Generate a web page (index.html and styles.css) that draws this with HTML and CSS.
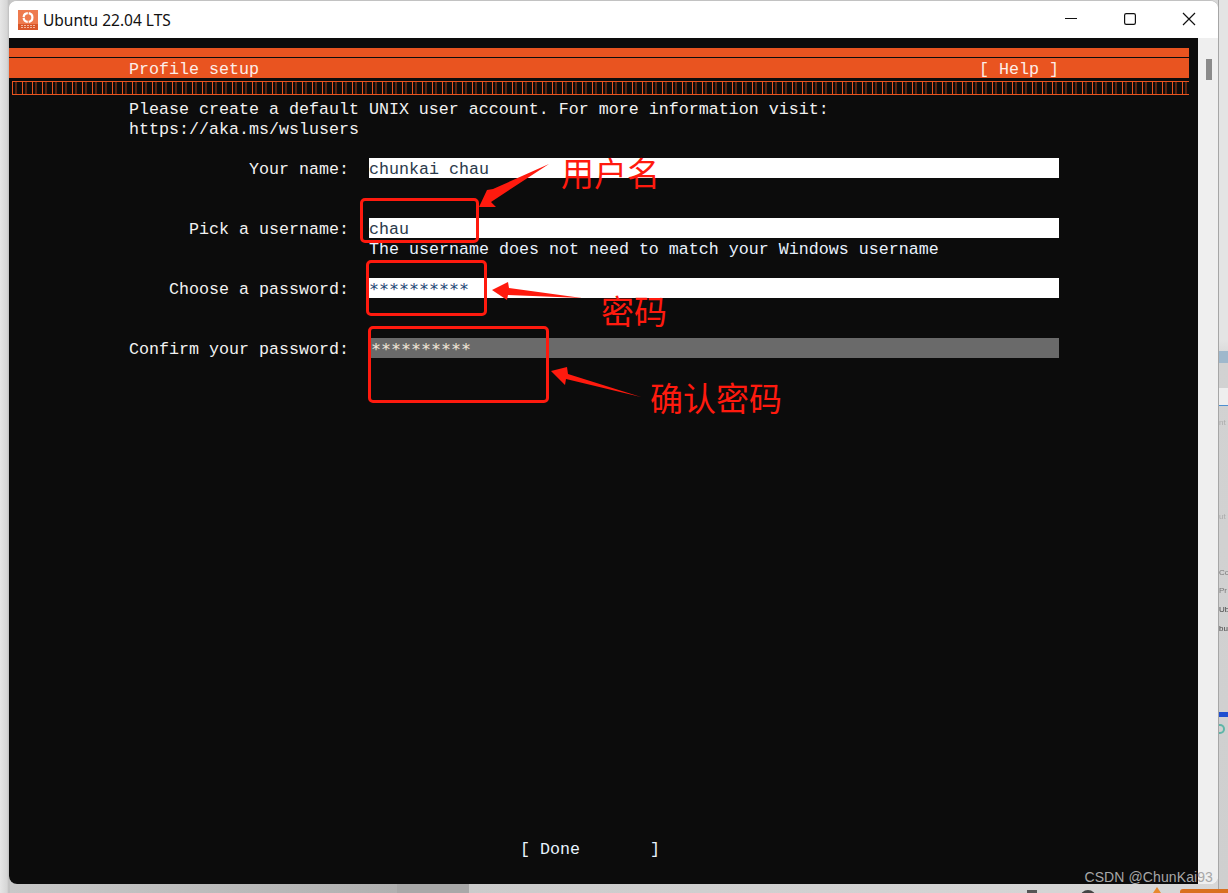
FILE: index.html
```html
<!DOCTYPE html>
<html lang="en">
<head>
<meta charset="utf-8">
<title>Ubuntu 22.04 LTS</title>
<link rel="stylesheet" href="styles.css">
</head>
<body>
<div class="desktop">
  <div class="backdrop-right">
    <div class="bd-blue"></div>
    <div class="bd-pale"></div>
    <div class="bd-line"></div>
    <span class="bd-t bd-t0">nt</span>
    <span class="bd-t bd-t5">ut</span>
    <span class="bd-t bd-t1">Co</span>
    <span class="bd-t bd-t2">Pr</span>
    <span class="bd-t bd-t3">Ub</span>
    <span class="bd-t bd-t4">bu</span>
    <div class="bd-bar"></div>
    <div class="bd-ring"></div>
  </div>
  <div class="taskbar-bits">
    <div class="bit bit-a"></div>
    <div class="bit bit-b"></div>
    <div class="bit bit-c"></div>
    <div class="bit bit-d"></div>
  </div>
  <div class="window">
    <header class="titlebar">
      <svg class="app-icon" width="20" height="20" viewBox="0 0 20 20">
        <rect width="20" height="20" fill="#ee7a4e"/>
        <rect y="14" width="20" height="6" fill="#d9572a"/>
        <circle cx="10" cy="7.5" r="4.4" fill="none" stroke="#fff" stroke-width="2.2" stroke-dasharray="6 1"/>
        <path d="M3 15.5h14M3 17.5h14" stroke="#f3b79f" stroke-width="1" stroke-dasharray="2 1"/>
      </svg>
      <span class="app-title">Ubuntu 22.04 LTS</span>
      <div class="win-controls">
        <svg class="win-btn" width="14" height="14" viewBox="0 0 14 14"><path d="M1 6.5h12" stroke="#111" stroke-width="1.2" fill="none"/></svg>
        <svg class="win-btn" width="14" height="14" viewBox="0 0 14 14"><rect x="1.6" y="1.6" width="10.8" height="10.8" rx="1.6" stroke="#111" stroke-width="1.2" fill="none"/></svg>
        <svg class="win-btn" width="14" height="14" viewBox="0 0 14 14"><path d="M1 1l12 12M13 1L1 13" stroke="#111" stroke-width="1.2" fill="none"/></svg>
      </div>
    </header>
    <div class="body-row">
      <main class="terminal">
        <div class="band-thin"></div>
        <div class="band-main">
          <span class="band-title">Profile setup</span>
          <span class="band-help">[ Help ]</span>
        </div>
        <div class="progress"></div>
        <p class="intro">Please create a default UNIX user account. For more information visit:<br>https://aka.ms/wslusers</p>
        <form class="form">
          <div class="field">
            <label class="field-label">Your name:</label>
            <div class="input">chunkai chau</div>
          </div>
          <div class="field">
            <label class="field-label">Pick a username:</label>
            <div class="input">chau</div>
          </div>
          <div class="hint">The username does not need to match your Windows username</div>
          <div class="field">
            <label class="field-label">Choose a password:</label>
            <div class="input input-pw">**********</div>
          </div>
          <div class="field">
            <label class="field-label">Confirm your password:</label>
            <div class="input input-focus">**********</div>
          </div>
        </form>
        <div class="done-row"><span class="done">[ Done&nbsp;&nbsp;&nbsp;&nbsp;&nbsp;&nbsp;&nbsp;]</span></div>
      </main>
      <aside class="scrollbar"><div class="thumb"></div></aside>
    </div>
  </div>

  <div class="box box-a"></div>
  <div class="box box-b"></div>
  <div class="box box-c"></div>
  <svg class="arrows" width="1228" height="893" viewBox="0 0 1228 893">
    <path fill="#ff1a0e" d="M549 164L493 189L487 190L479 207L496 207L491 202Z"/>
    <path fill="#ff1a0e" d="M582 298L509 288L508 282L492 290L507 300L508 295Z"/>
    <path fill="#ff1a0e" d="M641 397L568 374L567 367L551 371L565 385L566 379Z"/>
  </svg>
  <span class="note note-a">用户名</span>
  <span class="note note-b">密码</span>
  <span class="note note-c">确认密码</span>
  <span class="watermark">CSDN @ChunKai93</span>
</div>
</body>
</html>
```
FILE: styles.css
```css
* { box-sizing: border-box; }
html, body { margin: 0; padding: 0; }
body { width: 1228px; height: 893px; overflow: hidden; background: #c4c4c4; font-family: "Liberation Mono", monospace; }
.desktop { position: relative; width: 1228px; height: 893px; padding-left: 9px; background: linear-gradient(90deg, #e6e6e6 0, #d6d6d6 7px, #bdbdbd 9px, #c8c8c8 10px, #b6b6b6 300px, #b0b0b0 397px, #a8a8a8 397px, #a8a8a8 469px, #cbcbcb 469px, #d8d8d8 100%); overflow: hidden; }
.backdrop-right { position: absolute; left: 1218px; top: 0; width: 10px; height: 893px; border-left: 1px solid #a6a6a6; background: linear-gradient(180deg, #e4e4e4 0, #e4e4e4 340px, #d2d2d2 363px, #cfcfcf 100%); overflow: hidden; }
.bd-blue { position: absolute; left: 0; top: 351px; width: 9px; height: 12px; background: #9fb8cc; }
.bd-pale { position: absolute; left: 0; top: 388px; width: 9px; height: 17px; background: #eeeeee; }
.bd-line { position: absolute; left: 0; top: 405px; width: 9px; height: 1px; background: #4d8fd0; }
.bd-bar { position: absolute; left: 0; top: 712px; width: 9px; height: 5px; background: #1f4fd0; }
.bd-ring { position: absolute; left: 0; top: 724px; width: 6px; height: 10px; border: 2px solid #5fb6a8; border-left: 0; border-radius: 0 5px 5px 0; }
.bd-t { position: absolute; left: 0; font: 8px/10px "Liberation Sans", sans-serif; color: #777; filter: blur(0.3px); }
.bd-t0 { top: 418px; color: #aaa; } .bd-t5 { top: 512px; color: #aaa; }
.bd-t1 { top: 568px; } .bd-t2 { top: 586px; } .bd-t3 { top: 605px; color: #444; } .bd-t4 { top: 624px; color: #444; }
.bit { position: absolute; }
.bit-a { left: 1027px; top: 890px; width: 10px; height: 3px; background: #555; }
.bit-b { left: 1080px; top: 890px; width: 16px; height: 8px; border-radius: 8px 8px 0 0; background: #444; }
.bit-c { left: 1153px; top: 887px; width: 8px; height: 6px; background: #e8892c; clip-path: polygon(50% 0, 100% 100%, 0 100%); }
.bit-d { left: 1180px; top: 889px; width: 48px; height: 4px; background: #d9701f; border-radius: 3px 0 0 0; }
.window { position: relative; width: 1209px; height: 884px; display: flex; flex-direction: column; background: #fff; border-top: 1px solid #c2c2c2; border-radius: 8px; overflow: hidden; }
.titlebar { height: 37px; flex: none; display: flex; align-items: center; background: #fff; padding-left: 9px; }
.app-icon { flex: none; }
.app-title { margin-left: 5px; font: 15.5px "Noto Sans", "Liberation Sans", sans-serif; color: #111; }
.win-controls { margin-left: auto; display: flex; align-items: center; gap: 45px; padding-right: 22px; margin-top: -1px; }
.win-btn { display: block; }
.body-row { flex: 1; display: flex; min-height: 0; }
.terminal { width: 1189px; flex: none; background: #0c0c0c; color: #f2f2f2; font-size: 16.67px; line-height: 20px; padding-top: 10px; display: flex; flex-direction: column; white-space: pre; }
.band-thin { height: 9px; margin-right: 9px; background: #e95420; margin-bottom: 1px; }
.band-main { height: 20px; margin-right: 9px; background: #e95420; display: flex; justify-content: space-between; padding: 2px 130px 0 120px; color: #fdeee8; }
.progress { height: 14px; margin: 3px 9px 0 3px; border: solid #e95420; border-width: 1px 0 1px 1px; background: repeating-linear-gradient(90deg, #0c0c0c 0 2px, #5a2310 2px 4px, #0c0c0c 4px 9px, #e95420 9px 10px); }
.intro { margin: 5px 0 -2px; padding-left: 120px; }
.form { margin-top: 20px; display: flex; flex-direction: column; }
.field { display: flex; height: 20px; margin-bottom: 40px; }
.field-label { width: 360px; text-align: right; padding: 2px 20px 0 0; flex: none; }
.input { width: 690px; height: 20px; padding-top: 2px; background: #fff; color: #2b3a4a; }
.input-pw, .input-focus { font-family: "DejaVu Sans Mono", monospace; font-size: 16.6px; }
.input-pw { color: #1f4a78; }
.input-focus { background: #6a6a6a; color: #f0e6d8; padding-left: 2px; }
.hint { margin: -40px 0 20px 360px; height: 20px; padding-top: 2px; color: #e8f2ff; }
.done-row { margin-top: auto; height: 20px; margin-bottom: 24px; padding-left: 511px; }
.done { color: #e8f4ff; }
.scrollbar { flex: 1; background: #efefef; position: relative; padding: 21px 0 0 8px; }
.thumb { width: 6px; height: 21px; background: #8a8a8a; }
.box { position: absolute; border: 3px solid #ff1a0e; border-radius: 5px; }
.box-a { left: 360px; top: 198px; width: 119px; height: 45px; }
.box-b { left: 366px; top: 260px; width: 121px; height: 56px; }
.box-c { left: 368px; top: 326px; width: 181px; height: 77px; }
.arrows { position: absolute; left: 0; top: 0; pointer-events: none; }
.note { position: absolute; color: #ff1a0e; font-family: "Noto Sans CJK SC", sans-serif; font-size: 33px; line-height: 38px; }
.note-a { left: 561px; top: 153px; }
.note-b { left: 601px; top: 291px; }
.note-c { left: 650px; top: 378px; }
.watermark { position: absolute; right: 15px; top: 869px; font: 14px "Liberation Sans", sans-serif; color: #a8a8a8; letter-spacing: 0.1px; }
```
